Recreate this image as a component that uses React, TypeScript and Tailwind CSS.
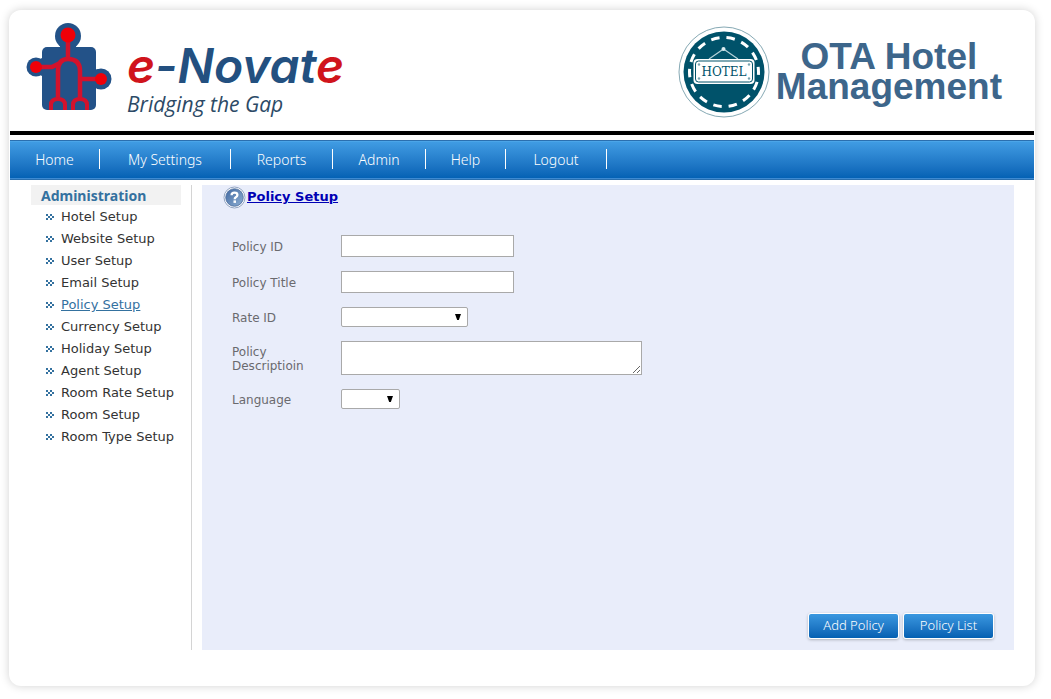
import type { ReactNode } from "react";

const menu = [
  { label: "Home", width: "w-[90px]" },
  { label: "My Settings", width: "w-[131px]" },
  { label: "Reports", width: "w-[102px]" },
  { label: "Admin", width: "w-[93px]" },
  { label: "Help", width: "w-[80px]" },
  { label: "Logout", width: "w-[101px]" },
];

const setupLinks = [
  "Hotel Setup",
  "Website Setup",
  "User Setup",
  "Email Setup",
  "Policy Setup",
  "Currency Setup",
  "Holiday Setup",
  "Agent Setup",
  "Room Rate Setup",
  "Room Setup",
  "Room Type Setup",
];

function PuzzleLogo() {
  return (
    <svg viewBox="0 0 86 90" className="h-[90px] w-[86px] shrink-0" aria-hidden="true">
      <g fill="#235288">
        <rect x="16" y="25" width="54" height="63" rx="5" />
        <circle cx="42" cy="14" r="13" />
        <circle cx="10" cy="45" r="9.5" />
        <circle cx="75" cy="57" r="10.5" />
        <path d="M35 22h14l2 5H33z M16 36v18l-4-2v-14z M68 48l5-1v19l-5-1z" />
      </g>
      <g fill="none" stroke="#d3122c" strokeWidth="4.5" strokeLinejoin="round">
        <path d="M42 16V37 M32 77V49Q32 37 42 37Q54 37 54 49V77 M10 45H26L34 41 M54 57H75" />
        <path d="M25 88V83Q25 77 32 77Q39 77 39 83V88 M47 88V83Q47 77 54 77Q61 77 61 83V88" strokeWidth="4" />
      </g>
      <g fill="#f00008">
        <circle cx="42" cy="13" r="7.5" />
        <circle cx="10" cy="45" r="6" />
        <circle cx="75" cy="57" r="6" />
      </g>
    </svg>
  );
}

function HotelBadge() {
  return (
    <svg viewBox="0 0 92 92" className="size-[92px] shrink-0" role="img" aria-label="Hotel">
      <circle cx="46" cy="46" r="45" fill="#fff" stroke="#86a9b4" strokeWidth="1" />
      <circle cx="46" cy="46" r="40.500" fill="#00526a" />
      <circle
        cx="46"
        cy="46"
        r="34.5"
        fill="none"
        stroke="#fff"
        strokeWidth="3"
        strokeDasharray="8.5 6.98"
        strokeDashoffset="-10"
      />
      <path d="M31 33L45.500 23L60 33" fill="none" stroke="#b7d3da" strokeWidth="1.2" />
      <circle cx="45.500" cy="23" r="2" fill="#dcecf0" />
      <rect x="15.500" y="33" width="61" height="25" rx="4" fill="#fff" />
      <rect x="17.500" y="35" width="57" height="21" rx="3" fill="none" stroke="#00526a" strokeWidth="1" />
      <g fill="#7aa3b0">
        <circle cx="21" cy="38.500" r="1.200" />
        <circle cx="71" cy="38.500" r="1.200" />
        <circle cx="21" cy="52.500" r="1.200" />
        <circle cx="71" cy="52.500" r="1.200" />
      </g>
      <text
        x="46"
        y="50"
        textAnchor="middle"
        fill="#00526a"
        className="font-['DejaVu_Serif',serif] text-[12px]"
      >
        HOTEL
      </text>
    </svg>
  );
}

function HelpIcon() {
  return (
    <svg viewBox="0 0 24 24" className="size-6 shrink-0" aria-hidden="true">
      <defs>
        <linearGradient id="help-fill" x1="0" y1="0" x2="1" y2="1">
          <stop offset="0" stopColor="#4068a0" />
          <stop offset="1" stopColor="#8fb0d4" />
        </linearGradient>
      </defs>
      <circle cx="12.500" cy="12.500" r="10.500" fill="#fff" stroke="#93a5c2" strokeWidth="1" />
      <circle cx="12.500" cy="12.500" r="8.800" fill="url(#help-fill)" stroke="#4b6c9c" strokeWidth="0.800" />
      <path d="M9.600 10.200Q9.600 7.600 12.500 7.600Q15.400 7.600 15.400 9.900Q15.400 11.300 13.800 12.200Q12.700 12.800 12.700 14.200" fill="none" stroke="#fff" strokeWidth="2.300" />
      <rect x="11.500" y="15.400" width="2.500" height="2.500" fill="#fff" />
    </svg>
  );
}

function Chevrons() {
  return (
    <svg viewBox="0 0 9 6" className="h-[6px] w-[9px] shrink-0" aria-hidden="true">
      <path d="M0 0h2v2h2v2h-2v2h-2v-2h2v-2h-2zM4 0h2v2h2v2h-2v2h-2v-2h2v-2h-2z" fill="#34719f" />
    </svg>
  );
}

function SelectBox({ id, className }: { id: string; className: string }) {
  return (
    <div className={`relative h-5 ${className}`}>
      <select
        id={id}
        className="block h-5 w-full appearance-none rounded-[2px] border border-[#a9a9a9] bg-white px-1 text-xs text-black"
      >
        <option value=""></option>
      </select>
      <svg viewBox="0 0 6 6" className="pointer-events-none absolute top-[7px] right-[7px] size-[6px]" aria-hidden="true">
        <path d="M0 0H6L3.800 6H2.200Z" fill="#000" />
      </svg>
    </div>
  );
}

function Label({ htmlFor, children }: { htmlFor: string; children: ReactNode }) {
  return (
    <label htmlFor={htmlFor} className="w-20 pt-0.5 text-[12px] leading-[14px] text-[#6a6a6e]">
      {children}
    </label>
  );
}

function ActionButton({ children }: { children: ReactNode }) {
  return (
    <button
      type="button"
      className="h-[26px] w-[91px] rounded-[3px] border border-white bg-linear-to-b from-[#3a98e0] to-[#0460b2] pb-0.5 font-['Noto_Sans',sans-serif] text-[13px] leading-[22px] font-light text-white shadow-[0_1px_3px_rgba(0,0,0,0.25)]"
    >
      {children}
    </button>
  );
}

export default function App() {
  return (
    <div className="bg-white pt-2.5 pr-4 pb-3 pl-[9px] font-['DejaVu_Sans',Verdana,sans-serif]">
      <div className="rounded-xl bg-white px-px pb-9 shadow-[0_0_10px_rgba(0,0,0,0.18)]">
        <header className="flex h-[125px] items-start justify-between border-b-4 border-black pr-8 pl-4">
          <a href="#home" className="flex items-start pt-3">
            <PuzzleLogo />
            <span className="flex flex-col pt-[18px] pl-[15px]">
              <span className="font-['Inter',sans-serif] text-[48px] leading-[52px] font-semibold text-[#235080] italic [font-feature-settings:'cv11']">
                <span className="text-[#d0141c]">e</span>-Novat<span className="text-[#d0141c]">e</span>
              </span>
              <span className="font-['Open_Sans',sans-serif] text-[21px] leading-6 text-[#2c4a66] italic">
                Bridging the Gap
              </span>
            </span>
          </a>
          <div className="flex items-start gap-1.5 pt-4">
            <HotelBadge />
            <h1 className="pt-4 text-center font-['Liberation_Sans',sans-serif] text-[37px] leading-[30px] font-bold text-[#3d668b]">
              OTA Hotel
              <br />
              Management
            </h1>
          </div>
        </header>

        <nav className="mt-[5px] flex h-10 items-center border-y border-[#2a6faf] bg-linear-to-b from-[#419de4] to-[#0260b3] pb-0.5 shadow-[inset_0_-1px_0_#3d8ad2,inset_0_1px_0_#4ba5e8]">
          {menu.map((item) => (
            <a
              key={item.label}
              href="#menu"
              className={`flex h-5 items-center justify-center border-r border-white font-['Noto_Sans',sans-serif] text-[14px] font-light text-white ${item.width}`}
            >
              {item.label}
            </a>
          ))}
        </nav>

        <div className="mt-[5px] flex pr-5 pl-[21px]">
          <aside className="w-[161px] shrink-0 border-r border-[#d4d4d4] pr-2.5">
            <h2 className="h-5 bg-[#f2f2f2] pl-2.5 font-['Noto_Sans',sans-serif] text-[14px] leading-[22px] font-bold text-[#34719f]">
              Administration
            </h2>
            <ul className="pt-px pl-[15px]">
              {setupLinks.map((label) => (
                <li key={label} className="flex h-[22px] items-center gap-[6px] whitespace-nowrap">
                  <Chevrons />
                  <a
                    href="#setup"
                    className={
                      label === "Policy Setup"
                        ? "text-[13px] text-[#34719f] underline"
                        : "text-[13px] text-[#333333]"
                    }
                  >
                    {label}
                  </a>
                </li>
              ))}
            </ul>
          </aside>

          <main className="ml-2.5 flex min-h-[465px] flex-1 flex-col bg-[#e9edfa] pr-5 pb-[11px] pl-5">
            <div className="flex h-6 items-center gap-px">
              <HelpIcon />
              <a href="#policy" className="text-[13px] font-bold text-[#0000b4] underline">
                Policy Setup
              </a>
            </div>
            <form className="mt-[26px] flex flex-1 flex-col pl-2.5">
              <div className="grid grid-cols-[109px_1fr] items-center gap-y-3.5">
                <Label htmlFor="policy-id">Policy ID</Label>
                <input id="policy-id" type="text" className="h-[22px] w-[173px] border border-[#a9a9a9] bg-white px-1 text-xs" />
                <Label htmlFor="policy-title">Policy Title</Label>
                <input id="policy-title" type="text" className="h-[22px] w-[173px] border border-[#a9a9a9] bg-white px-1 text-xs" />
                <Label htmlFor="rate-id">Rate ID</Label>
                <SelectBox id="rate-id" className="w-[127px]" />
                <Label htmlFor="policy-description">Policy Descriptioin</Label>
                <textarea
                  id="policy-description"
                  className="block h-[34px] w-[301px] resize border border-[#a9a9a9] bg-white px-1 text-xs"
                />
                <Label htmlFor="language">Language</Label>
                <SelectBox id="language" className="w-[59px]" />
              </div>
              <div className="mt-auto flex justify-end gap-1">
                <ActionButton>Add Policy</ActionButton>
                <ActionButton>Policy List</ActionButton>
              </div>
            </form>
          </main>
        </div>
      </div>
    </div>
  );
}
